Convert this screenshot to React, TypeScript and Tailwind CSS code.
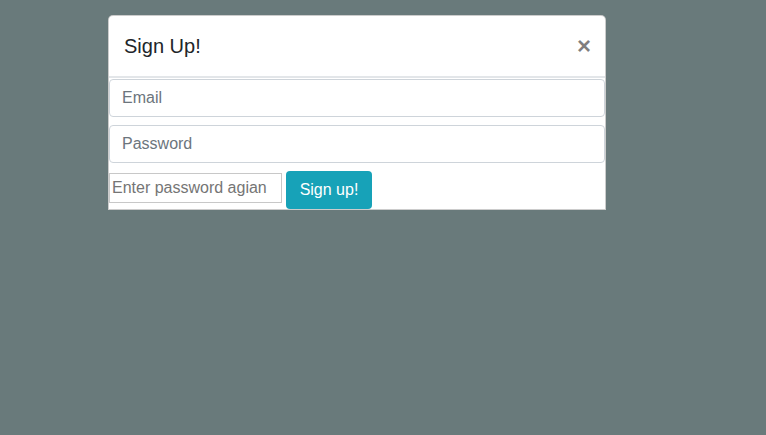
export default function App() {
  return (
    <div
      className="min-h-screen w-full bg-[#697a7b] pl-[108px] pt-[15px]"
      style={{ fontFamily: '"Liberation Sans", Arial, sans-serif' }}
    >
      <div className="w-[498px] h-[195px] overflow-hidden rounded-t-[5px] border border-black/20 bg-white text-[#212529]">
        {/* header */}
        <div className="flex h-[62px] items-center justify-between border-b-2 border-[#e3e6e9] pl-[15px] pr-4">
          <h5 className="text-[20px] leading-[30px] text-[#212529]">Sign Up!</h5>
          <button className="mr-[-2px] text-[24px] font-bold leading-none text-black/50">×</button>
        </div>

        {/* body */}
        <div className="flex flex-col gap-2 pt-px">
          <input
            placeholder="Email"
            className="h-[38px] w-full rounded-[4px] border border-[#ced4da] px-3 text-[16px] text-[#495057] placeholder:text-[#6c757d] outline-none"
          />
          <input
            type="password"
            placeholder="Password"
            className="h-[38px] w-full rounded-[4px] border border-[#ced4da] px-3 text-[16px] text-[#495057] placeholder:text-[#6c757d] outline-none"
          />
          <div className="flex items-start">
            <input
              type="password"
              placeholder="Enter password agian"
              className="mt-[2px] h-[30px] w-[173px] border border-[#c8c8c8] px-[2px] text-[16px] placeholder:text-[#757575] outline-none"
            />
            <button className="ml-1 h-[38px] w-[86px] rounded-[4px] bg-[#17a2b8] text-[16px] text-white">
              Sign up!
            </button>
          </div>
        </div>
      </div>
    </div>
  );
}
